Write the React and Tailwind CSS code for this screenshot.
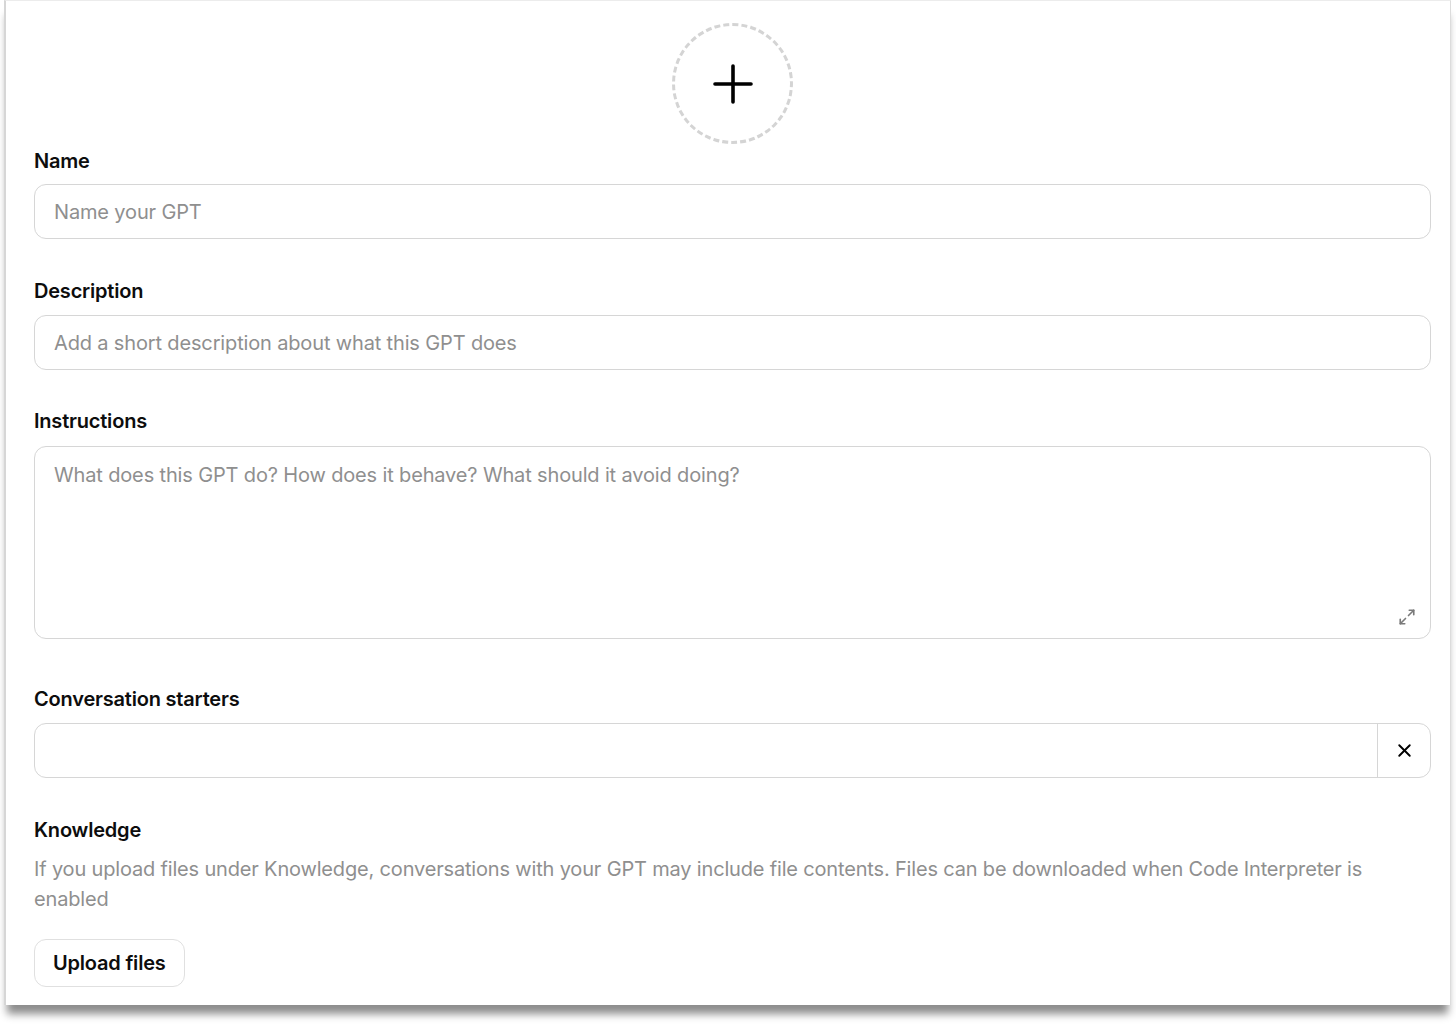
import React from 'react';
import { Maximize2, X } from 'lucide-react';

const Field = ({ label, children, className = '', gap = 'mt-[10px]' }) => (
  <div className={className}>
    <label className="block text-[20px] leading-[28px] font-semibold tracking-[-0.2px] text-[#0d0d0d]">{label}</label>
    <div className={gap}>{children}</div>
  </div>
);

const inputCls =
  'w-full h-[55px] rounded-xl border border-[#d6d6d6] px-[19px] text-[20px] tracking-[-0.15px] text-[#0d0d0d] placeholder:text-[#8f8f8f] outline-none';

export default function App() {
  return (
    <div className="w-[1456px] h-[1027px] bg-white" style={{ fontFamily: 'Inter, "Noto Sans", sans-serif' }}>
      <div className="ml-[4px] w-[1447px] h-[1005px] bg-white border-l-[2px] border-l-[#d6d6d6] border-r border-r-[#dcdcdc] border-t border-t-[#ececec] shadow-[0_12px_8px_-3px_rgba(0,0,0,0.45)] pl-[28px] pr-[19px]">
        <div className="flex justify-center pt-[22px]">
          <button className="w-[121px] h-[121px] rounded-full border-[3px] border-dashed border-[#d4d4d4] flex items-center justify-center">
            <svg width="40" height="40" viewBox="0 0 40 40" fill="none" stroke="#000" strokeWidth="3.6" strokeLinecap="round">
              <line x1="20" y1="2" x2="20" y2="38" />
              <line x1="2" y1="20" x2="38" y2="20" />
            </svg>
          </button>
        </div>

        <Field label="Name" className="mt-[3px]" gap="mt-[9px]">
          <input className={inputCls} placeholder="Name your GPT" />
        </Field>

        <Field label="Description" className="mt-[38px]">
          <input className={inputCls} placeholder="Add a short description about what this GPT does" />
        </Field>

        <Field label="Instructions" className="mt-[37px]" gap="mt-[11px]">
          <div className="relative">
            <textarea
              className="block w-full h-[193px] resize-none rounded-xl border border-[#d6d6d6] px-[19px] py-[14px] text-[20px] leading-[28px] tracking-[-0.15px] text-[#0d0d0d] placeholder:text-[#8f8f8f] outline-none"
              placeholder="What does this GPT do? How does it behave? What should it avoid doing?"
            />
            <Maximize2 size={18} strokeWidth={2.2} className="absolute right-[15px] bottom-[13px] text-[#7a7a7a]" />
          </div>
        </Field>

        <Field label="Conversation starters" className="mt-[46px]">
          <div className="flex h-[55px] rounded-xl border border-[#d6d6d6] overflow-hidden">
            <input className="flex-1 px-[19px] text-[20px] outline-none" />
            <button className="w-[53px] border-l border-[#d6d6d6] flex items-center justify-center">
              <X size={21} strokeWidth={2.2} className="text-black" />
            </button>
          </div>
        </Field>

        <div className="mt-[38px]">
          <div className="text-[20px] leading-[28px] font-semibold tracking-[-0.2px] text-[#0d0d0d]">Knowledge</div>
          <p className="mt-[10px] text-[20px] leading-[30px] tracking-[-0.17px] text-[#8f8f8f]">
            If you upload files under Knowledge, conversations with your GPT may include file contents. Files can be downloaded when Code Interpreter is enabled
          </p>
          <button className="mt-[25px] h-[48px] px-[18px] rounded-xl border border-[#e0e0e0] text-[20px] font-semibold tracking-[-0.2px] text-[#0d0d0d]">
            Upload files
          </button>
        </div>
      </div>
    </div>
  );
}
